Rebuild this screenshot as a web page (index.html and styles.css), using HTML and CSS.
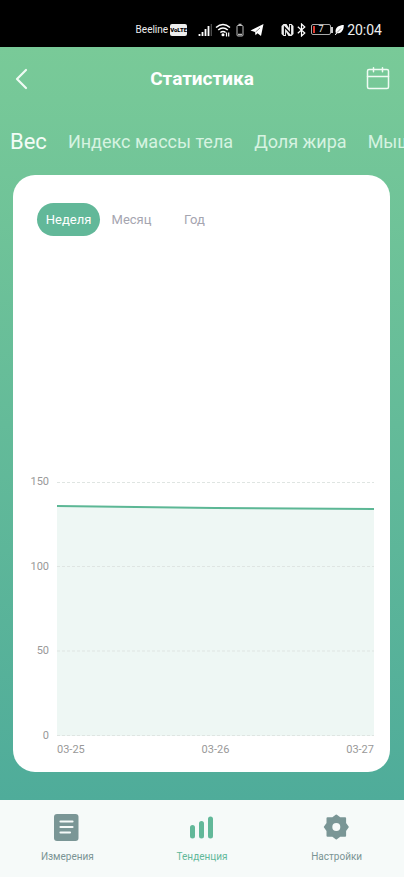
FILE: index.html
```html
<!DOCTYPE html>
<html lang="ru">
<head>
<meta charset="utf-8">
<meta name="viewport" content="width=device-width, initial-scale=1">
<title>Статистика</title>
<link rel="stylesheet" href="styles.css">
</head>
<body>
<div class="status">
  <span class="carrier">Beeline</span>
  <span class="volte">VoLTE</span>
  <svg class="signal" width="14" height="14" viewBox="0 0 14 14"><path d="M1.500 13v-2M4.500 13v-4M7.500 13v-7M10.500 13v-10" stroke="#fff" stroke-width="1.800"/><path d="M13.300 13V1" stroke="#555" stroke-width="1.200"/></svg>
  <svg class="wifi" width="16" height="14" viewBox="0 0 16 14" fill="none" stroke="#fff" stroke-width="1.500"><path d="M1 4.500Q8-1.500 15 4.500M3.200 7Q8 3 12.800 7M5.400 9.500Q8 7.400 10.600 9.500"/><circle cx="8" cy="11.800" r=".8" fill="#fff"/><path d="M11.500 9.500v4M13.700 9.500v4" stroke-width="1.200"/></svg>
  <svg class="cell" width="8" height="14" viewBox="0 0 8 14" fill="none" stroke="#bbb"><rect x="1" y="2.500" width="6" height="10.500" rx="1"/><path d="M2.500 1.500h3M2 11.500h4" stroke-width="1.500"/></svg>
  <svg class="plane" width="14" height="14" viewBox="0 0 14 14"><path d="M.5 7.500 13.500 1 11 13 7.500 10.200 5.500 12.300 5 9z" fill="#fff"/><path d="m5.500 9 4.500-4" stroke="#000" stroke-width=".5" fill="none"/></svg>
  <svg class="nfc" width="13" height="14" viewBox="0 0 13 14"><path d="M.5 3 2.500 1h3l2.500 4V1h2.500l2 2v8l-2 2h-3L5 9v4H2.500l-2-2z" fill="#eee"/><path d="M3.500 12V4l6 6.500V2" stroke="#000" stroke-width="1.200" fill="none"/></svg>
  <svg class="bluetooth" width="9" height="14" viewBox="0 0 9 14"><path d="m.8 3.800 7 6.200L4.500 13V1l3.300 3-7 6.200" fill="none" stroke="#fff" stroke-width="1.200"/></svg>
  <span class="battery"><span class="level">7</span></span>
  <svg class="leaf" width="9" height="14" viewBox="0 0 9 14"><path d="M8.800 2C3.500 2-.8 5 .9 10.200 6.500 11 8.800 7 8.800 2z" fill="#fff"/><path d="M.3 12 2 9.500" stroke="#fff"/><path d="M2 9.500 6 5.500" stroke="#000" stroke-width=".5"/></svg>
  <time class="clock">20:04</time>
</div>

<header class="header">
  <button class="icon-button" type="button" aria-label="Назад">
    <svg width="14" height="22" viewBox="0 0 14 22"><path d="M12 2 3 11l9 9" fill="none" stroke="#effbf3" stroke-width="2.200" stroke-linecap="round" stroke-linejoin="round"/></svg>
  </button>
  <h1>Статистика</h1>
  <button class="icon-button" type="button" aria-label="Календарь">
    <svg width="24" height="24" viewBox="0 0 24 24" fill="none" stroke="#effbf3" stroke-width="1.500" stroke-linecap="round"><rect x="1.500" y="2.500" width="21" height="19" rx="1.500"/><path d="M1.500 9.500h21M7.500 .8v4M16.500 .8v4"/></svg>
  </button>
</header>

<nav class="metrics" aria-label="Показатели">
  <a class="current" href="#weight">Вес</a>
  <a href="#bmi">Индекс массы тела</a>
  <a href="#fat">Доля жира</a>
  <a href="#muscle">Мышцы</a>
</nav>

<main class="card">
  <div class="periods">
    <button class="selected" type="button">Неделя</button>
    <button type="button">Месяц</button>
    <button type="button">Год</button>
  </div>
  <div class="chart">
    <div class="scale"><span>150</span><span>100</span><span>50</span><span>0</span></div>
    <svg class="plot" viewBox="0 0 317 254" preserveAspectRatio="none" role="img" aria-label="Вес за неделю">
      <path class="area" d="M0 24 158 26 317 27V254H0z"/>
      <path class="grid" d="M0 .5H317M0 84.500H317M0 169H317M0 253.500H317"/>
      <path class="line" d="M0 24 158 26 317 27"/>
    </svg>
    <div class="dates"><span>03-25</span><span>03-26</span><span>03-27</span></div>
  </div>
</main>

<nav class="tabbar" aria-label="Разделы">
  <a href="#measure">
    <svg width="28" height="28" viewBox="0 0 28 28"><rect x="1" y="1" width="24.500" height="27" rx="3" fill="#7a9696"/><path d="M7.500 8.500h12M7.500 14h12M7.500 19.500h9.500" stroke="#f6faf9" stroke-width="2.200" stroke-linecap="round"/></svg>
    <span>Измерения</span>
  </a>
  <a class="active" href="#trend">
    <svg width="28" height="28" viewBox="0 0 28 28"><path d="M4.500 14.500v8.500M13.500 10.500v12.500M22.500 6v17" stroke="#62b899" stroke-width="5" stroke-linecap="round"/></svg>
    <span>Тенденция</span>
  </a>
  <a href="#settings">
    <svg width="28" height="28" viewBox="0 0 28 28"><path d="M13.300 2.500 17 5.200H22.100V10.300L24.800 14 22.100 17.700V22.800H17L13.300 25.500 9.600 22.800H4.500V17.700L1.800 14 4.500 10.300V5.200H9.600z" fill="#7a9696" stroke="#7a9696" stroke-width="2" stroke-linejoin="round"/><circle cx="13.300" cy="14" r="4" fill="#f6faf9"/></svg>
    <span>Настройки</span>
  </a>
</nav>
</body>
</html>
```

FILE: styles.css
```css
* {
  box-sizing: border-box;
}

body {
  margin: 0;
  min-height: 100vh;
  display: flex;
  flex-direction: column;
  overflow-x: hidden;
  font-family: Roboto, "Liberation Sans", sans-serif;
  background: linear-gradient(#79ca98 47px, #4fac9a 800px);
}

button {
  padding: 0;
  border: 0;
  background: none;
  font: inherit;
}

a {
  color: inherit;
  text-decoration: none;
}

svg {
  display: block;
  flex: none;
}

/* Status bar */
.status {
  display: flex;
  align-items: center;
  justify-content: flex-end;
  height: 47px;
  padding: 12px 22px 0 0;
  background: #000;
  color: #eee;
}

.carrier {
  font-size: 10px;
}

.volte {
  width: 17px;
  margin: 0 11px 0 2px;
  border-radius: 2px;
  background: #eee;
  color: #000;
  font-size: 6px;
  font-weight: 900;
  line-height: 12px;
  text-align: center;
}

.wifi {
  margin: 0 5px 0 3px;
}

.plane {
  margin: 0 17px 0 6px;
}

.bluetooth {
  margin: 0 5px 0 3px;
}

.battery {
  display: flex;
  align-items: center;
}

.battery::after {
  content: "";
  width: 2px;
  height: 6px;
  background: #ccc;
}

.level {
  width: 20px;
  height: 11px;
  border: 1px solid #aaa;
  border-radius: 2px;
  background: linear-gradient(#e03a30, #e03a30) 1px 1px / 2px 7px no-repeat;
  font-size: 9px;
  line-height: 9px;
  text-align: center;
}

.leaf {
  margin: 0 3px 0 2px;
}

.clock {
  font-size: 14px;
}

/* Header */
.header {
  display: flex;
  align-items: center;
  justify-content: space-between;
  height: 64px;
  padding: 0 14px;
}

.header h1 {
  margin: 0;
  color: #fff;
  font-size: 19px;
  font-weight: 700;
  line-height: 24px;
}

.icon-button {
  display: grid;
  place-items: center;
  width: 24px;
  height: 24px;
}

.icon-button:first-child {
  justify-items: start;
}

/* Metric tabs */
.metrics {
  display: flex;
  align-items: center;
  gap: 21px;
  height: 64px;
  padding: 0 10px 4px;
  overflow: hidden;
  color: #d6f3e1;
  font-size: 18px;
  white-space: nowrap;
}

.metrics .current {
  color: #f3fcf6;
  font-size: 22px;
}

/* Card */
.card {
  flex: 1;
  display: flex;
  flex-direction: column;
  justify-content: space-between;
  margin: 0 14px 28px 13px;
  padding: 28px 16px 14px;
  border-radius: 22px;
  background: #fff;
}

.periods {
  display: flex;
  padding-left: 8px;
}

.periods button {
  width: 63px;
  height: 33px;
  border-radius: 17px;
  color: #a5a5b0;
  font-size: 13px;
}

.periods .selected {
  background: #62b899;
  color: #fff;
}

.chart {
  display: grid;
  grid-template-columns: 20px 1fr;
  column-gap: 8px;
}

.scale {
  display: flex;
  flex-direction: column;
  justify-content: space-between;
  margin: -6px 0;
  color: #999;
  font-size: 11px;
  line-height: 12px;
  text-align: right;
}

.plot {
  width: 100%;
  height: 254px;
  overflow: visible;
}

.area {
  fill: #eef7f4;
}

.grid {
  fill: none;
  stroke: #dfe5e2;
  stroke-dasharray: 3 2;
}

.line {
  fill: none;
  stroke: #5cb795;
  stroke-width: 2;
}

.dates {
  grid-column: 2;
  display: flex;
  justify-content: space-between;
  padding: 7px 0 1px;
  color: #999;
  font-size: 11px;
  line-height: 14px;
}

/* Bottom bar */
.tabbar {
  display: flex;
  height: 77px;
  background: #f6faf9;
  color: #7a9494;
}

.tabbar a {
  flex: 1;
  display: flex;
  flex-direction: column;
  align-items: center;
  gap: 9px;
  padding-top: 13px;
  font-size: 10px;
  line-height: 14px;
}

.tabbar .active {
  color: #62b899;
}
```
